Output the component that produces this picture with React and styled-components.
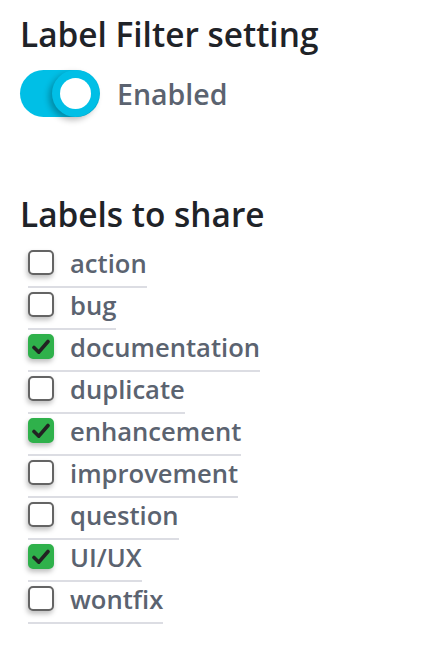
import React, { useState } from 'react';
import styled, { createGlobalStyle } from 'styled-components';

const GlobalStyle = createGlobalStyle`
  body {
    margin: 0;
    background: #ffffff;
    font-family: "Open Sans", "Noto Sans", sans-serif;
  }
`;

const Page = styled.div`
  padding: 14px 20px 20px 20px;
`;

const Heading = styled.h2`
  margin: 0;
  font-size: 33.4px;
  line-height: 40px;
  font-weight: 600;
  color: #1f2328;
`;

const ToggleRow = styled.label`
  display: flex;
  align-items: center;
  gap: 17px;
  margin-top: 16px;
  cursor: pointer;
`;

const Track = styled.span`
  position: relative;
  display: inline-block;
  width: 80px;
  height: 47px;
  border-radius: 24px;
  background: #00bfe6;
`;

const Knob = styled.span`
  position: absolute;
  top: 0;
  left: ${p => (p.on ? '32px' : '0')};
  width: 47px;
  height: 47px;
  border-radius: 50%;
  background: #00bfe6;
  box-shadow: -3px 3px 6px rgba(0, 0, 0, 0.28);
  display: flex;
  align-items: center;
  justify-content: center;

  &::after {
    content: '';
    width: 31px;
    height: 31px;
    border-radius: 50%;
    background: #ffffff;
  }
`;

const ToggleText = styled.span`
  font-size: 28.5px;
  font-weight: 600;
  color: #5b6370;
  line-height: 36px;
`;

const Section = styled.div`
  margin-top: 77px;
`;

const List = styled.div`
  display: flex;
  flex-direction: column;
  align-items: flex-start;
  margin-top: 12px;
  padding-left: 8px;
`;

const Row = styled.label`
  display: flex;
  align-items: flex-start;
  gap: 16px;
  height: 40px;
  border-bottom: 2px solid #dcdde3;
  cursor: pointer;
`;

const Box = styled.span`
  box-sizing: border-box;
  width: 26px;
  height: 25px;
  margin-top: 4px;
  border-radius: 5px;
  border: 2px solid ${p => (p.checked ? '#2fb14b' : '#646464')};
  background: ${p => (p.checked ? '#2fb14b' : '#ffffff')};
  box-shadow: -1px 3px 5px rgba(0, 0, 0, 0.25);
  display: flex;
  align-items: center;
  justify-content: center;
`;

const LabelText = styled.span`
  font-size: 25.6px;
  line-height: 36px;
  font-weight: 600;
  color: #5b6370;
`;

const labels = [
  { name: 'action', checked: false },
  { name: 'bug', checked: false },
  { name: 'documentation', checked: true },
  { name: 'duplicate', checked: false },
  { name: 'enhancement', checked: true },
  { name: 'improvement', checked: false },
  { name: 'question', checked: false },
  { name: 'UI/UX', checked: true },
  { name: 'wontfix', checked: false },
];

const Check = () => (
  <svg width="18" height="16" viewBox="0 0 18 16">
    <path d="M2 8.5 L6.8 13.2 L16 2.5" fill="none" stroke="#222" strokeWidth="3.6" strokeLinecap="round" strokeLinejoin="round" />
  </svg>
);

const App = () => {
  const [enabled, setEnabled] = useState(true);
  const [items, setItems] = useState(labels);

  const toggle = name =>
    setItems(items.map(i => (i.name === name ? { ...i, checked: !i.checked } : i)));

  return (
    <Page>
      <GlobalStyle />
      <Heading>Label Filter setting</Heading>
      <ToggleRow onClick={() => setEnabled(!enabled)}>
        <Track>
          <Knob on={enabled ? 1 : 0} />
        </Track>
        <ToggleText>{enabled ? 'Enabled' : 'Disabled'}</ToggleText>
      </ToggleRow>

      <Section>
        <Heading>Labels to share</Heading>
        <List>
          {items.map(item => (
            <Row key={item.name} onClick={() => toggle(item.name)}>
              <Box checked={item.checked}>{item.checked && <Check />}</Box>
              <LabelText>{item.name}</LabelText>
            </Row>
          ))}
        </List>
      </Section>
    </Page>
  );
};

export default App;
